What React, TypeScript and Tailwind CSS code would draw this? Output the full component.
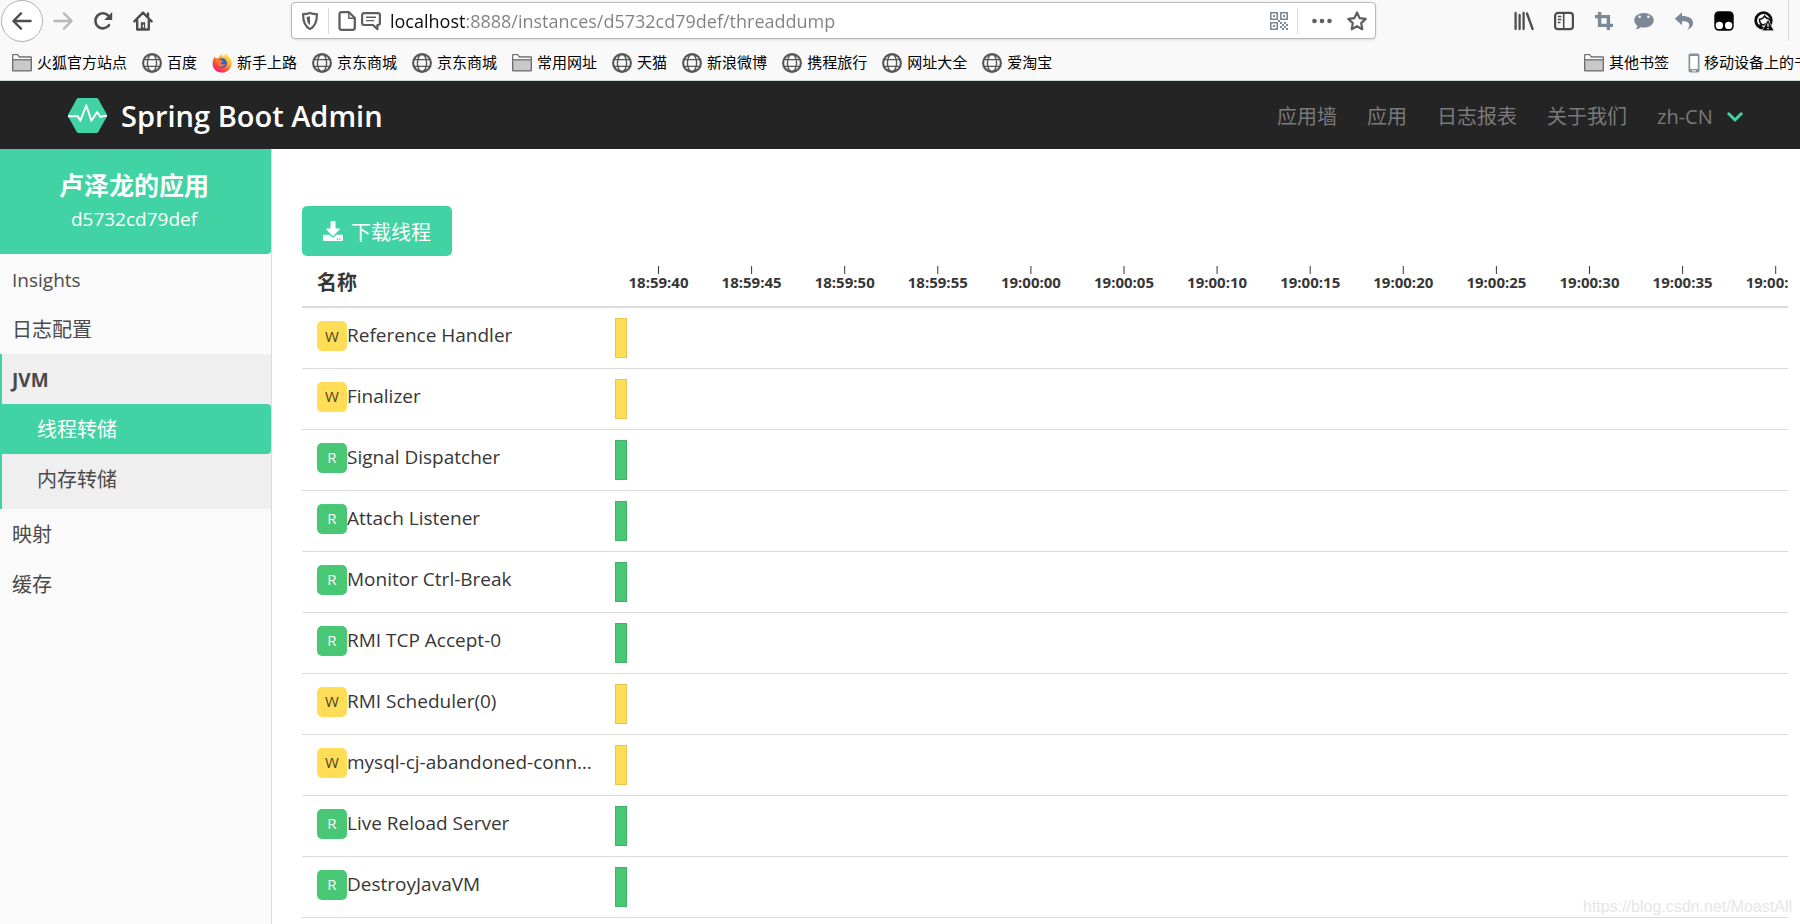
import React from "react";
import { FaDownload } from "react-icons/fa";

function FolderIcon() {
  return (
    <svg viewBox="0 0 20 20" className="size-5 shrink-0" aria-hidden="true">
      <path d="M0.7 17.3V2.2q0-.6.6-.6h4.2l1.8 2.400h11.400q.6 0 .6.6v12.700q0 .6-.6.6H1.300q-.6 0-.6-.6z" fill="#c9c9c9" stroke="#6a6a6a" strokeWidth="1.3" />
      <path d="M1.400 2.300h3.800l1.800 2.400h11.600v1.500H1.400z" fill="#fafafa" />
      <path d="M1 6.800h18" stroke="#6a6a6a" strokeWidth="1.2" />
    </svg>
  );
}

function GlobeIcon() {
  return (
    <svg viewBox="0 0 20 20" className="size-5 shrink-0" fill="none" stroke="#555" aria-hidden="true">
      <circle cx="10" cy="10" r="8.9" strokeWidth="2.1" />
      <ellipse cx="10" cy="10" rx="4.6" ry="8.6" strokeWidth="1.4" />
      <path d="M1.5 6.7h17M1.5 13.3h17" strokeWidth="1.2" />
    </svg>
  );
}

function FirefoxIcon() {
  return (
    <svg viewBox="0 0 20 20" className="size-5 shrink-0" aria-hidden="true">
      <defs>
        <linearGradient id="ff" x1="0.85" y1="0.05" x2="0.2" y2="0.9">
          <stop offset="0" stopColor="#fff04a" />
          <stop offset="0.35" stopColor="#ffb52a" />
          <stop offset="0.65" stopColor="#ff5a36" />
          <stop offset="1" stopColor="#f0207a" />
        </linearGradient>
      </defs>
      <path d="M10 19.6C4.6 19.6.6 15.600.6 10.400.6 7.300 1.700 5 3 3.400c.2 1 .5 1.600 1 2 .8-.6 1.800-.7 2.600-.6C7.500 3 8.700 1.900 10.200 1.300c-.2 1.300.5 2 1.800 2.700C13 3 13 1.500 12.700.4c2.600 1 4.300 3.300 5 5.300.3-.5.300-1 .2-1.500 1.100 1.700 1.700 3.800 1.700 6 0 5.400-4.200 9.400-9.600 9.400z" fill="url(#ff)" />
      <circle cx="10.200" cy="10" r="4.700" fill="#2a5fd6" />
      <path d="M4 7.400c2-1.500 4.400-.8 5.600.1.900 0 1.500.2 1.700.6-.3 1-1.600 1.300-2.200 1.700-.4 1 .2 1.500.9 1.600 1.200.2 1.700-.6 3.100-.3-.8 2.200-3.100 3-5 2.400C5.600 12.800 4.300 10.300 4 7.400z" fill="#ff7a2c" />
    </svg>
  );
}

function PhoneIcon() {
  return (
    <svg viewBox="0 0 20 20" className="size-5 shrink-0" aria-hidden="true">
      <rect x="4.5" y="0.5" width="11" height="19" rx="1.8" fill="#87919d" />
      <rect x="6.2" y="3" width="7.600" height="13" fill="#fff" />
      <rect x="8" y="17" width="4" height="1.5" fill="#dfe3e8" />
    </svg>
  );
}

type Bookmark = { label: string; icon: "folder" | "globe" | "firefox" };

const bookmarks: Bookmark[] = [
  { label: "火狐官方站点", icon: "folder" },
  { label: "百度", icon: "globe" },
  { label: "新手上路", icon: "firefox" },
  { label: "京东商城", icon: "globe" },
  { label: "京东商城", icon: "globe" },
  { label: "常用网址", icon: "folder" },
  { label: "天猫", icon: "globe" },
  { label: "新浪微博", icon: "globe" },
  { label: "携程旅行", icon: "globe" },
  { label: "网址大全", icon: "globe" },
  { label: "爱淘宝", icon: "globe" },
];

function BookmarkIcon({ icon }: { icon: Bookmark["icon"] }) {
  if (icon === "folder") return <FolderIcon />;
  if (icon === "firefox") return <FirefoxIcon />;
  return <GlobeIcon />;
}

function QrIcon() {
  return (
    <svg viewBox="0 0 18 18" className="size-[18px]" fill="#7d8896" aria-hidden="true">
      <path fillRule="evenodd" d="M0 0h8v8H0zM1.600 1.600v4.800h4.800V1.600zM10 0h8v8h-8zM11.600 1.600v4.800h4.800V1.600zM0 10h8v8H0zM1.600 11.600v4.800h4.800v-4.800z" />
      <path d="M3 3h2v2H3zM13 3h2v2h-2zM3 13h2v2H3zM10 10h2v2h-2zM14 10h2v2h-2zM12 12h2v2h-2zM16 12h2v2h-2zM10 14h2v2h-2zM14 14h2v2h-2zM12 16h2v2h-2zM16 16h2v2h-2zM8 8h2v2H8z" />
    </svg>
  );
}

const extensionIcons: { name: string; art: React.ReactNode }[] = [
  {
    name: "Library",
    art: (
      <g stroke="#4d4d4d" strokeWidth="2.3" strokeLinecap="round" fill="none">
        <path d="M1.600 2v16M5.600 4v14M9.600 2v16M13 2.500l5.600 15.500" />
      </g>
    ),
  },
  {
    name: "Sidebars",
    art: (
      <g stroke="#4d4d4d" fill="none">
        <rect x="1.1" y="1.8" width="17.800" height="16.400" rx="3" strokeWidth="2.2" />
        <path d="M9.700 2v16" strokeWidth="1.600" />
        <path d="M3.800 5.500h3.600M3.800 8.500h3.600M3.800 11.500h2.600" strokeWidth="1.300" />
      </g>
    ),
  },
  {
    name: "Crop",
    art: (
      <g stroke="#7d8896" strokeWidth="3.400" fill="none">
        <path d="M5.600 1v13.400H19M1 5.600h13.400V19" />
      </g>
    ),
  },
  {
    name: "Chat",
    art: (
      <g>
        <path d="M10 2C4.500 2 .3 5 .3 9.200c0 2.300 1.300 4.300 3.200 5.600-.2 1.400-1 2.700-1.700 3.500 2 0 3.800-.9 5-2 1 .2 2 .3 3.200.3 5.500 0 9.700-3.100 9.700-7.400S15.500 2 10 2z" fill="#7d8896" />
        <circle cx="5.600" cy="5.800" r="1.300" fill="#f9f9fa" />
        <circle cx="14.400" cy="5.800" r="1.300" fill="#f9f9fa" />
      </g>
    ),
  },
  {
    name: "Undo",
    art: <path d="M8 1.200L.8 7.800 8 14.200v-4c4.500-.2 7.500 1 7.300 4 0 1.700-.8 3-2 4.300 3.500-1 5.700-3.500 5.700-6.600C19 7.200 14.500 5 8 5z" fill="#7d8896" />,
  },
  {
    name: "Tampermonkey",
    art: (
      <g>
        <rect x="0.300" y="0.300" width="19.400" height="19.400" rx="4.500" fill="#000" />
        <circle cx="5.400" cy="14.400" r="3.700" fill="#fff" />
        <circle cx="14.600" cy="14.400" r="3.700" fill="#fff" />
      </g>
    ),
  },
  {
    name: "Account warning",
    art: (
      <g>
        <circle cx="9.500" cy="9.500" r="7.800" fill="#fff" stroke="#0c0c0d" strokeWidth="2.800" />
        <path d="M5.500 8.300c2.500 0 4-1.300 5-3.300 1 1.500 2.500 2.600 4.500 3v1.500l-3.500 3.500-2.500 1c-1.800-.5-3.500-2.700-3.500-5.700z" fill="none" stroke="#0c0c0d" strokeWidth="1.500" />
        <path d="M2.500 14.500l4.500-1.500 1.500 2.500-1.500 2.500z" fill="#0c0c0d" />
        <path d="M14 8.500l6 11.300H8z" fill="#0c0c0d" stroke="#f9f9fa" strokeWidth="0.6" />
        <path d="M14 12.500v3.300M14 17v1.300" stroke="#fff" strokeWidth="1.300" />
      </g>
    ),
  },
];

function BrowserChrome() {
  return (
    <div className="overflow-hidden border-b border-[#cfdcd8] bg-[#f9f9fa] text-black">
      <div className="flex h-[41px] items-center">
        <div className="flex w-[291px] shrink-0 items-center pl-px">
          <button aria-label="Back" className="flex size-[42px] items-center justify-center rounded-full border border-[#b1b1b1] bg-white">
            <svg viewBox="0 0 20 20" className="size-5" fill="none" stroke="#4d4d4d" strokeWidth="2.400" strokeLinecap="round" strokeLinejoin="round">
              <path d="M18.600 10H1.800M9 2.400L1.400 10 9 17.600" />
            </svg>
          </button>
          <button aria-label="Forward" className="flex size-10 items-center justify-center">
            <svg viewBox="0 0 20 20" className="size-5" fill="none" stroke="#b9b9ba" strokeWidth="2.400" strokeLinecap="round" strokeLinejoin="round">
              <path d="M1.400 10h16.800M11 2.400l7.600 7.600-7.600 7.600" />
            </svg>
          </button>
          <button aria-label="Reload" className="flex size-10 items-center justify-center">
            <svg viewBox="0 0 20 20" className="size-5" fill="none" stroke="#4d4d4d" strokeWidth="2.600" strokeLinecap="round">
              <path d="M15.300 4.600A7.500 7.500 0 1 0 16 14.200" />
              <path d="M19.200 1v7.900h-8z" fill="#4d4d4d" stroke="none" />
            </svg>
          </button>
          <button aria-label="Home" className="flex size-10 items-center justify-center">
            <svg viewBox="0 0 20 20" className="size-5" fill="none" stroke="#4d4d4d" strokeWidth="2.400" strokeLinecap="round" strokeLinejoin="round">
              <path d="M1.400 10.400L10 1.600l8.600 8.800M4.200 9.500v9h11.600v-9M15 2.500v3" />
              <path d="M7.800 18.500v-7.300h4.400v7.300z" fill="#4d4d4d" stroke="none" />
              <path d="M10.300 14v2" stroke="#f9f9fa" strokeWidth="1.200" />
            </svg>
          </button>
        </div>
        <div className="flex h-[37px] flex-1 items-center rounded-sm border border-[#b8b8b8] bg-white shadow-sm">
          <svg viewBox="0 0 20 20" className="ml-2 size-5 shrink-0" fill="none" stroke="#5f5f5f" aria-hidden="true">
            <path d="M10 1.900c2.200.9 4.400 1.200 6.900 1.300.1 6.200-1 11.600-6.900 14.900C4.100 14.800 3 9.400 3.100 3.200 5.600 3.100 7.800 2.800 10 1.900z" strokeWidth="2.200" strokeLinejoin="round" />
            <path d="M10 5.300v9c-2.600-2-3.300-4.800-3.400-8.300z" fill="#5f5f5f" stroke="none" />
          </svg>
          <span className="ml-2 h-[26px] w-px bg-[#d7d7db]" />
          <svg viewBox="0 0 20 20" className="ml-2 size-5 shrink-0" fill="none" stroke="#5f5f5f" aria-hidden="true">
            <path d="M4.500 1.200h7.500l5.800 5.800v9.800q0 2-2 2h-11.300q-2 0-2-2V3.200q0-2 2-2z" strokeWidth="2.300" strokeLinejoin="round" />
            <path d="M11.800 1.500v5.700h5.700" strokeWidth="1.400" />
          </svg>
          <svg viewBox="0 0 20 20" className="ml-1 size-5 shrink-0" fill="none" stroke="#5f5f5f" aria-hidden="true">
            <path d="M3 2.200h14q1.900 0 1.900 1.900v8q0 1.900-1.900 1.900h-.6v4.300L12 14H3q-1.900 0-1.900-1.900v-8Q1.100 2.200 3 2.200z" strokeWidth="2.200" strokeLinejoin="round" />
            <path d="M5 6.300h10M5 9.600h8" strokeWidth="1.400" />
          </svg>
          <input
            aria-label="Address"
            type="text"
            defaultValue="localhost:8888/instances/d5732cd79def/threaddump"
            className="ml-[9px] min-w-0 flex-1 bg-[linear-gradient(to_right,#0c0c0d_76px,#808083_76px)] bg-clip-text text-lg text-transparent outline-none"
          />
          <QrIcon />
          <span className="ml-[9px] h-[26px] w-px bg-[#d7d7db]" />
          <button aria-label="Page actions" className="ml-[14px]">
            <svg viewBox="0 0 20 20" className="size-5" fill="#5f5f5f">
              <circle cx="2.500" cy="10" r="2.300" />
              <circle cx="10" cy="10" r="2.300" />
              <circle cx="17.500" cy="10" r="2.300" />
            </svg>
          </button>
          <button aria-label="Bookmark this page" className="mr-2 ml-[15px]">
            <svg viewBox="0 0 20 20" className="size-5" fill="none" stroke="#5f5f5f" strokeWidth="2.200" strokeLinejoin="round">
              <path d="M10 1.500l2.600 5.600 6.100.8-4.500 4.200 1.100 6.100-5.300-3-5.300 3 1.100-6.100L1.300 7.900l6.100-.8z" />
            </svg>
          </button>
        </div>
        <div className="ml-[138px] flex items-center gap-5">
          {extensionIcons.map((item) => (
            <button key={item.name} aria-label={item.name}>
              <svg viewBox="0 0 20 20" className="size-5">
                {item.art}
              </svg>
            </button>
          ))}
        </div>
        <span className="mr-[11px] ml-[14px] h-full w-px bg-[#d7d7db]" />
      </div>
      <div className="flex h-[39px] items-center justify-between pt-1 pl-3 text-[15px] whitespace-nowrap">
        <div className="flex gap-[15px]">
          {bookmarks.map((item, index) => (
            <a key={index} href="#" className="flex items-center gap-[5px]">
              <BookmarkIcon icon={item.icon} />
              {item.label}
            </a>
          ))}
        </div>
        <div className="flex w-[216px] gap-[15px] overflow-hidden">
          <a href="#" className="flex items-center gap-[5px]">
            <FolderIcon />
            其他书签
          </a>
          <a href="#" className="flex items-center">
            <PhoneIcon />
            移动设备上的书签
          </a>
        </div>
      </div>
    </div>
  );
}

function AppHeader() {
  return (
    <header className="flex h-[68px] items-center justify-between bg-[#242424] pr-[57px] pl-[68px] text-xl text-[#7a7a7a]">
      <a href="#" className="flex items-center gap-[14px] text-white">
        <svg viewBox="0 0 39 35" className="h-[35px] w-[39px]" aria-hidden="true">
          <path d="M10.300 0h18.400q.9 0 1.400.8L38.600 16q.7 1.500 0 3L30.100 34.200q-.5.800-1.400.8H10.300q-.9 0-1.400-.8L.4 19q-.7-1.500 0-3L8.900.8q.5-.8 1.400-.8z" fill="#42d3a5" />
          <path d="M0 18.300h9.800l2.500 4.500L18.300 7.300l5 15.400 5.800-8.600 3.500 5 2.400-1H39" fill="none" stroke="#fff" strokeWidth="1.900" strokeLinejoin="round" />
        </svg>
        <span className="pt-[3px] text-[29px] font-semibold">Spring Boot Admin</span>
      </a>
      <nav className="flex items-center gap-[30px] pt-[3px]">
        <a href="#">应用墙</a>
        <a href="#">应用</a>
        <a href="#">日志报表</a>
        <a href="#">关于我们</a>
        <label className="flex items-center gap-[14px]">
          <select aria-label="Language" className="appearance-none bg-transparent text-xl outline-none">
            <option>zh-CN</option>
          </select>
          <svg viewBox="0 0 16 10" className="h-[10px] w-4" fill="none" stroke="#42d3a5" strokeWidth="3" strokeLinecap="round" strokeLinejoin="round" aria-hidden="true">
            <path d="M1.800 1.800L8 8l6.200-6.200" />
          </svg>
        </label>
      </nav>
    </header>
  );
}

function Sidebar() {
  return (
    <aside className="w-[272px] shrink-0 border-r border-[#dbdbdb] bg-[#fafafa] text-xl text-[#4a4a4a]">
      <a href="#" className="flex h-[105px] flex-col items-center rounded-br-sm bg-[#42d3a5] pt-[18px] pr-[3px] text-white">
        <span className="text-[25px] leading-9 font-bold">卢泽龙的应用</span>
        <span className="text-[19px] leading-8">d5732cd79def</span>
      </a>
      <nav>
        <a href="#" className="block h-[50px] px-3 pt-px text-[19px] leading-[50px]">Insights</a>
        <a href="#" className="block h-[50px] px-3 pt-px leading-[50px]">日志配置</a>
        <div className="border-l-2 border-[#42d3a5] bg-[#efefef] pb-[5px]">
          <a href="#" className="block h-[50px] px-[10px] pt-px text-[19px] leading-[50px] font-bold">JVM</a>
          <a href="#" className="block h-[50px] rounded-r-sm bg-[#42d3a5] px-[35px] pt-px leading-[50px] text-white">线程转储</a>
          <a href="#" className="block h-[50px] px-[35px] pt-px leading-[50px]">内存转储</a>
        </div>
        <a href="#" className="block h-[50px] px-3 pt-px leading-[50px]">映射</a>
        <a href="#" className="block h-[50px] px-3 pt-px leading-[50px]">缓存</a>
      </nav>
    </aside>
  );
}

type Thread = { name: string; state: "W" | "R" };

const threads: Thread[] = [
  { name: "Reference Handler", state: "W" },
  { name: "Finalizer", state: "W" },
  { name: "Signal Dispatcher", state: "R" },
  { name: "Attach Listener", state: "R" },
  { name: "Monitor Ctrl-Break", state: "R" },
  { name: "RMI TCP Accept-0", state: "R" },
  { name: "RMI Scheduler(0)", state: "W" },
  { name: "mysql-cj-abandoned-connection-cleanup", state: "W" },
  { name: "Live Reload Server", state: "R" },
  { name: "DestroyJavaVM", state: "R" },
];

const ticks = [
  "18:59:40",
  "18:59:45",
  "18:59:50",
  "18:59:55",
  "19:00:00",
  "19:00:05",
  "19:00:10",
  "19:00:15",
  "19:00:20",
  "19:00:25",
  "19:00:30",
  "19:00:35",
  "19:00:40",
];

const badgeStyle = {
  W: "bg-[#ffdd57] text-[#4f4522]",
  R: "bg-[#48c774] text-white",
};

const barStyle = {
  W: "border-[#e6c84e] bg-[#ffdd57]",
  R: "border-[#41b368] bg-[#48c774]",
};

function TimeAxis() {
  return (
    <svg className="block h-10 w-full overflow-hidden" aria-label="Timeline">
      {ticks.map((label, i) => {
        const x = 43.5 + i * 93.1;
        return (
          <g key={label}>
            <path d={`M${x} 0v8`} stroke="#363636" />
            <text x={x} y="22" textAnchor="middle" fill="#363636" className="text-[15px] font-bold">
              {label}
            </text>
          </g>
        );
      })}
    </svg>
  );
}

function ThreadTable() {
  return (
    <table className="w-full table-fixed border-collapse text-left text-[#363636]">
      <thead>
        <tr className="border-b-2 border-[#dbdbdb]">
          <th className="w-[313px] px-[15px] pt-1 text-xl font-bold">名称</th>
          <th className="pt-[10px] pb-0">
            <TimeAxis />
          </th>
        </tr>
      </thead>
      <tbody>
        {threads.map((thread) => (
          <tr key={thread.name} className="h-[61px] border-b border-[#dbdbdb]">
            <td className="px-[15px] pt-0 pb-1">
              <div className="flex items-center">
                <span className={`flex size-[30px] shrink-0 items-center justify-center rounded-[5px] text-[15px] ${badgeStyle[thread.state]}`}>
                  {thread.state}
                </span>
                <span className="truncate pb-0.5 text-[19px] leading-7">{thread.name}</span>
              </div>
            </td>
            <td className="p-0">
              <div className={`h-10 w-3 border ${barStyle[thread.state]}`} />
            </td>
          </tr>
        ))}
      </tbody>
    </table>
  );
}

export default function App() {
  return (
    <div className="relative flex min-h-screen flex-col bg-white font-['Open_Sans','Noto_Sans_CJK_SC',sans-serif]">
      <BrowserChrome />
      <AppHeader />
      <div className="flex flex-1">
        <Sidebar />
        <main className="min-w-0 flex-1 pt-[57px] pr-3 pl-[30px]">
          <button className="flex h-[50px] items-center gap-2 rounded-[5px] bg-[#42d3a5] px-[21px] text-xl text-white">
            <FaDownload className="size-5" />
            <span className="pt-[3px]">下载线程</span>
          </button>
          <ThreadTable />
        </main>
      </div>
      <span className="absolute right-2 bottom-[5px] font-['Liberation_Sans',sans-serif] text-base text-[#e6e6e6]">
        https://blog.csdn.net/MoastAll
      </span>
    </div>
  );
}
